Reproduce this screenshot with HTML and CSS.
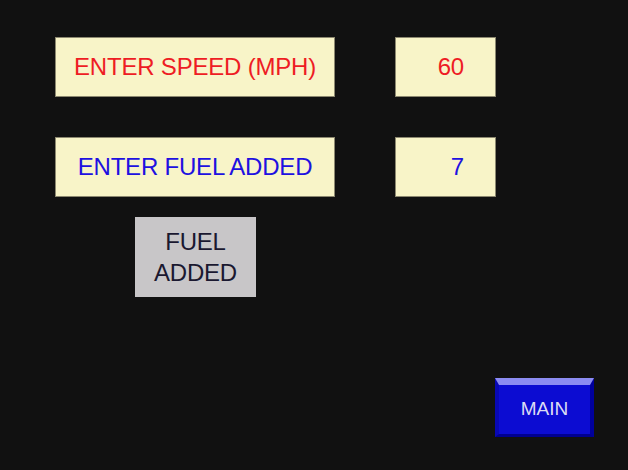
FILE: index.html
```html
<!DOCTYPE html>
<html>
<head>
<meta charset="utf-8">
<link rel="stylesheet" href="styles.css">
</head>
<body>
<div class="screen">
  <div class="row row-first">
    <div class="box label red">ENTER SPEED (MPH)</div>
    <div class="box value red">60</div>
  </div>
  <div class="row row-second">
    <div class="box label blue">ENTER FUEL ADDED</div>
    <div class="box value blue">7</div>
  </div>
  <div class="fuel-btn">FUEL<br>ADDED</div>
  <div class="main-row">
    <div class="main-btn">MAIN</div>
  </div>
</div>
</body>
</html>
```

FILE: styles.css
```css
html, body {
  margin: 0;
  padding: 0;
  background: #111111;
}
.screen {
  width: 628px;
  height: 470px;
  background: #111111;
  font-family: "Liberation Sans", Arial, sans-serif;
  overflow: hidden;
}
.row {
  display: flex;
  gap: 60px;
  padding-left: 55px;
}
.row-first {
  padding-top: 37px;
}
.row-second {
  margin-top: 40px;
}
.box {
  box-sizing: border-box;
  height: 60px;
  background: #f8f4c8;
  border: 1px solid #8c8870;
  display: flex;
  align-items: center;
  font-size: 24px;
  letter-spacing: -0.2px;
}
.label {
  width: 280px;
  justify-content: center;
}
.value {
  width: 101px;
  justify-content: flex-end;
  padding-right: 31px;
}
.red { color: #ee1c24; }
.blue { color: #2010e0; }
.fuel-btn {
  box-sizing: border-box;
  width: 121px;
  height: 80px;
  margin-top: 20px;
  margin-left: 135px;
  background: #c8c6c8;
  color: #1a1830;
  font-size: 24px;
  line-height: 31px;
  letter-spacing: -0.2px;
  text-align: center;
  display: flex;
  align-items: center;
  justify-content: center;
}
.main-row {
  display: flex;
  justify-content: flex-end;
  padding-right: 34px;
  margin-top: 81px;
}
.main-btn {
  box-sizing: border-box;
  width: 99px;
  height: 59px;
  background: #0c0cd2;
  border-top: 7px solid #8c8cf2;
  border-left: 4px solid #0808b4;
  border-right: 4px solid #00009c;
  border-bottom: 3px solid #000090;
  color: #dcdcf4;
  font-size: 19px;
  display: flex;
  align-items: center;
  justify-content: center;
  padding-bottom: 2px;
}
```
